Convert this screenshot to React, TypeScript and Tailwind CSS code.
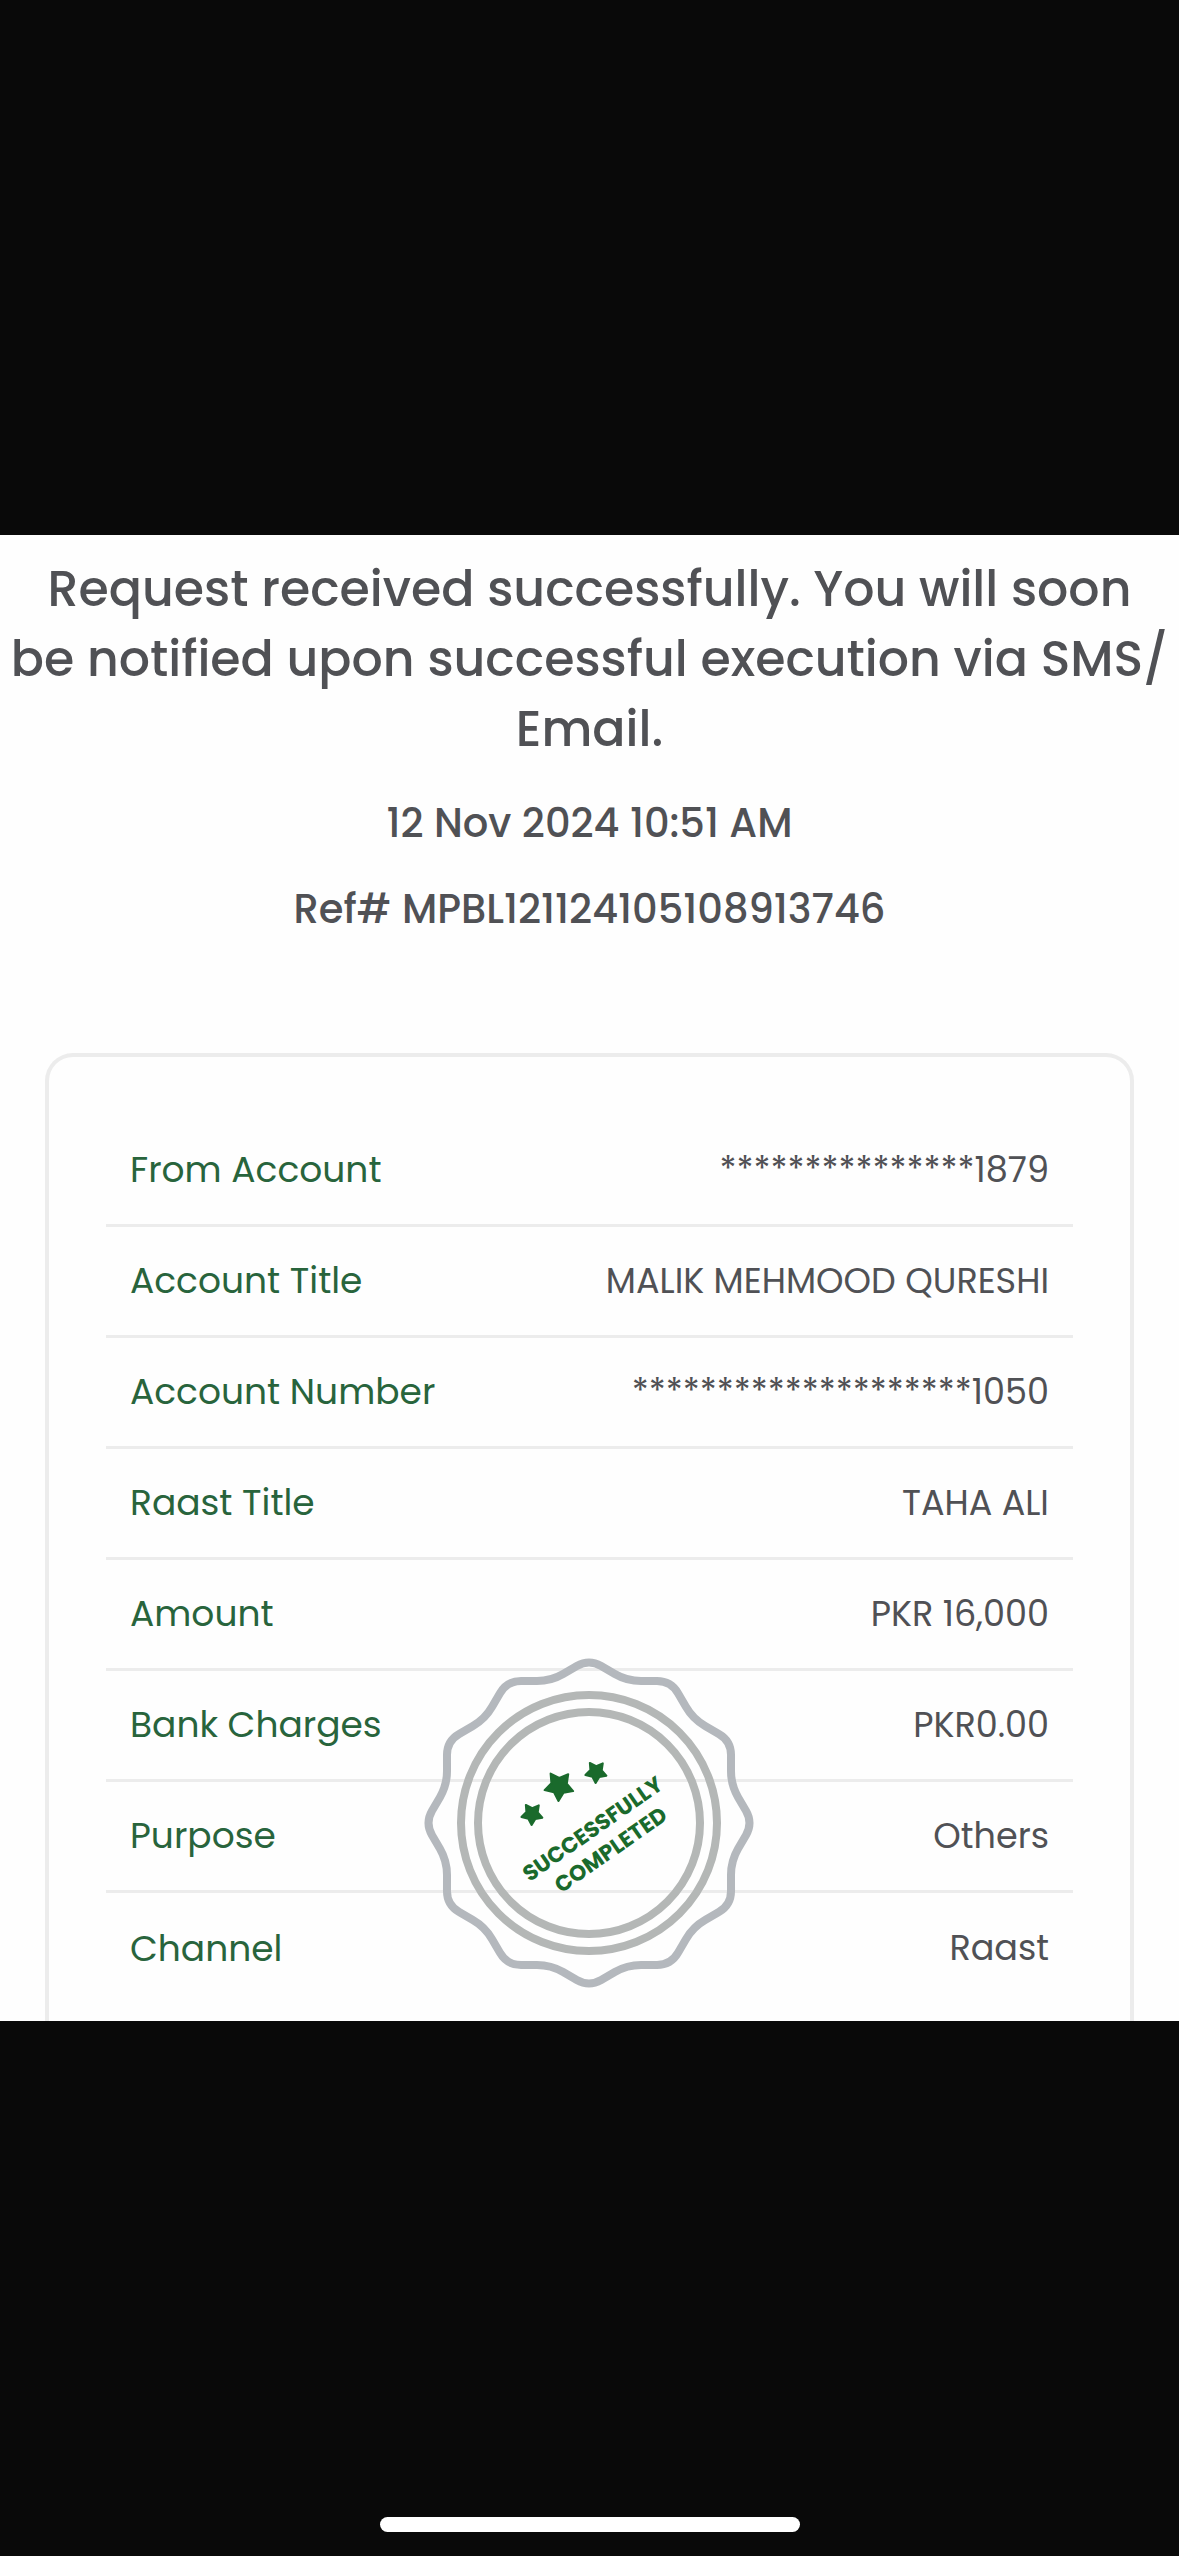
import React from "react";

type Detail = { label: string; value: string };

const details: Detail[] = [
  { label: "From Account", value: "***************1879" },
  { label: "Account Title", value: "MALIK MEHMOOD QURESHI" },
  { label: "Account Number", value: "********************1050" },
  { label: "Raast Title", value: "TAHA ALI" },
  { label: "Amount", value: "PKR 16,000" },
  { label: "Bank Charges", value: "PKR0.00" },
  { label: "Purpose", value: "Others" },
  { label: "Channel", value: "Raast" },
];

type Point = [number, number];

const polar = (radius: number, degrees: number): Point => {
  const a = (degrees * Math.PI) / 180;
  return [radius * Math.sin(a), -radius * Math.cos(a)];
};

const between = (a: Point, b: Point, t: number): Point => [
  a[0] + (b[0] - a[0]) * t,
  a[1] + (b[1] - a[1]) * t,
];

const text = (p: Point) => `${p[0].toFixed(2)} ${p[1].toFixed(2)}`;

// Twelve-pointed edge with every corner rounded off.
function sealEdge(): string {
  const corners = Array.from({ length: 24 }, (_, i) => polar(i % 2 === 0 ? 164 : 147, i * 15));
  const parts = corners.map((corner, i) => {
    const before = corners[(i + 23) % 24];
    const after = corners[(i + 1) % 24];
    const start = between(corner, before, 0.32);
    const end = between(corner, after, 0.32);
    return `${i === 0 ? "M" : "L"}${text(start)} Q${text(corner)} ${text(end)}`;
  });
  return `${parts.join(" ")} Z`;
}

function starPoints(radius: number): string {
  return Array.from({ length: 10 }, (_, i) =>
    text(polar(i % 2 === 0 ? radius : radius * 0.54, 180 + i * 36)),
  ).join(" ");
}

function Star({ x, y, radius }: { x: number; y: number; radius: number }) {
  return (
    <polygon
      points={starPoints(radius)}
      transform={`translate(${x} ${y}) rotate(2)`}
      fill="#1a6a2c"
      stroke="#1a6a2c"
      strokeWidth="2"
      strokeLinejoin="round"
    />
  );
}

function Seal() {
  return (
    <svg
      viewBox="-169 -170 340 340"
      className="pointer-events-none absolute top-[596px] left-1/2 size-[340px] -translate-x-1/2"
      role="img"
      aria-label="Successfully completed"
    >
      <path d={sealEdge()} fill="none" stroke="#b4b8bd" strokeWidth="8" />
      <circle r="128" fill="none" stroke="#b4b7b6" strokeWidth="8" />
      <circle r="111" fill="none" stroke="#b4b7b6" strokeWidth="8" />
      <Star x={-57} y={-9} radius={11} />
      <Star x={-30} y={-37} radius={15} />
      <Star x={7} y={-51} radius={11} />
      <g
        fill="#1a6a2c"
        textAnchor="middle"
        className="font-['Poppins','Inter',sans-serif] text-[22px] font-bold"
      >
        <text transform="translate(8 12) rotate(-35)">SUCCESSFULLY</text>
        <text transform="translate(26 33) rotate(-35)">COMPLETED</text>
      </g>
    </svg>
  );
}

export default function App() {
  return (
    <div className="flex min-h-screen flex-col bg-[#090909] pt-[535px] font-['Poppins','Inter',sans-serif]">
      <main className="overflow-hidden bg-[#fefefe] text-[#505155]">
        <header className="pt-[19px] text-center font-medium">
          <h1 className="text-[49px] leading-[70px]">
            Request received successfully. You will soon
            <br />
            be notified upon successful execution via SMS/
            <br />
            Email.
          </h1>
          <p className="mt-[29px] text-[40px] leading-[60px]">12 Nov 2024 10:51 AM</p>
          <p className="mt-[26px] text-[40px] leading-[60px]">Ref# MPBL121124105108913746</p>
        </header>

        <section className="relative mx-[45px] mt-[114px] rounded-t-[28px] border-4 border-b-0 border-[#ececec] px-[57px] pt-[59px] pb-[17px]">
          <dl>
            {details.map(({ label, value }) => (
              <div
                key={label}
                className="flex h-[111px] items-center justify-between border-b-3 border-[#ececec] px-6 last:border-b-0"
              >
                <dt className="text-[36px] text-[#28643c]">{label}</dt>
                <dd className="text-[35px]">{value}</dd>
              </div>
            ))}
          </dl>
          <Seal />
        </section>
      </main>

      <footer className="flex flex-1 items-end justify-center pb-6">
        <div className="h-[15px] w-[420px] rounded-full bg-white" />
      </footer>
    </div>
  );
}
